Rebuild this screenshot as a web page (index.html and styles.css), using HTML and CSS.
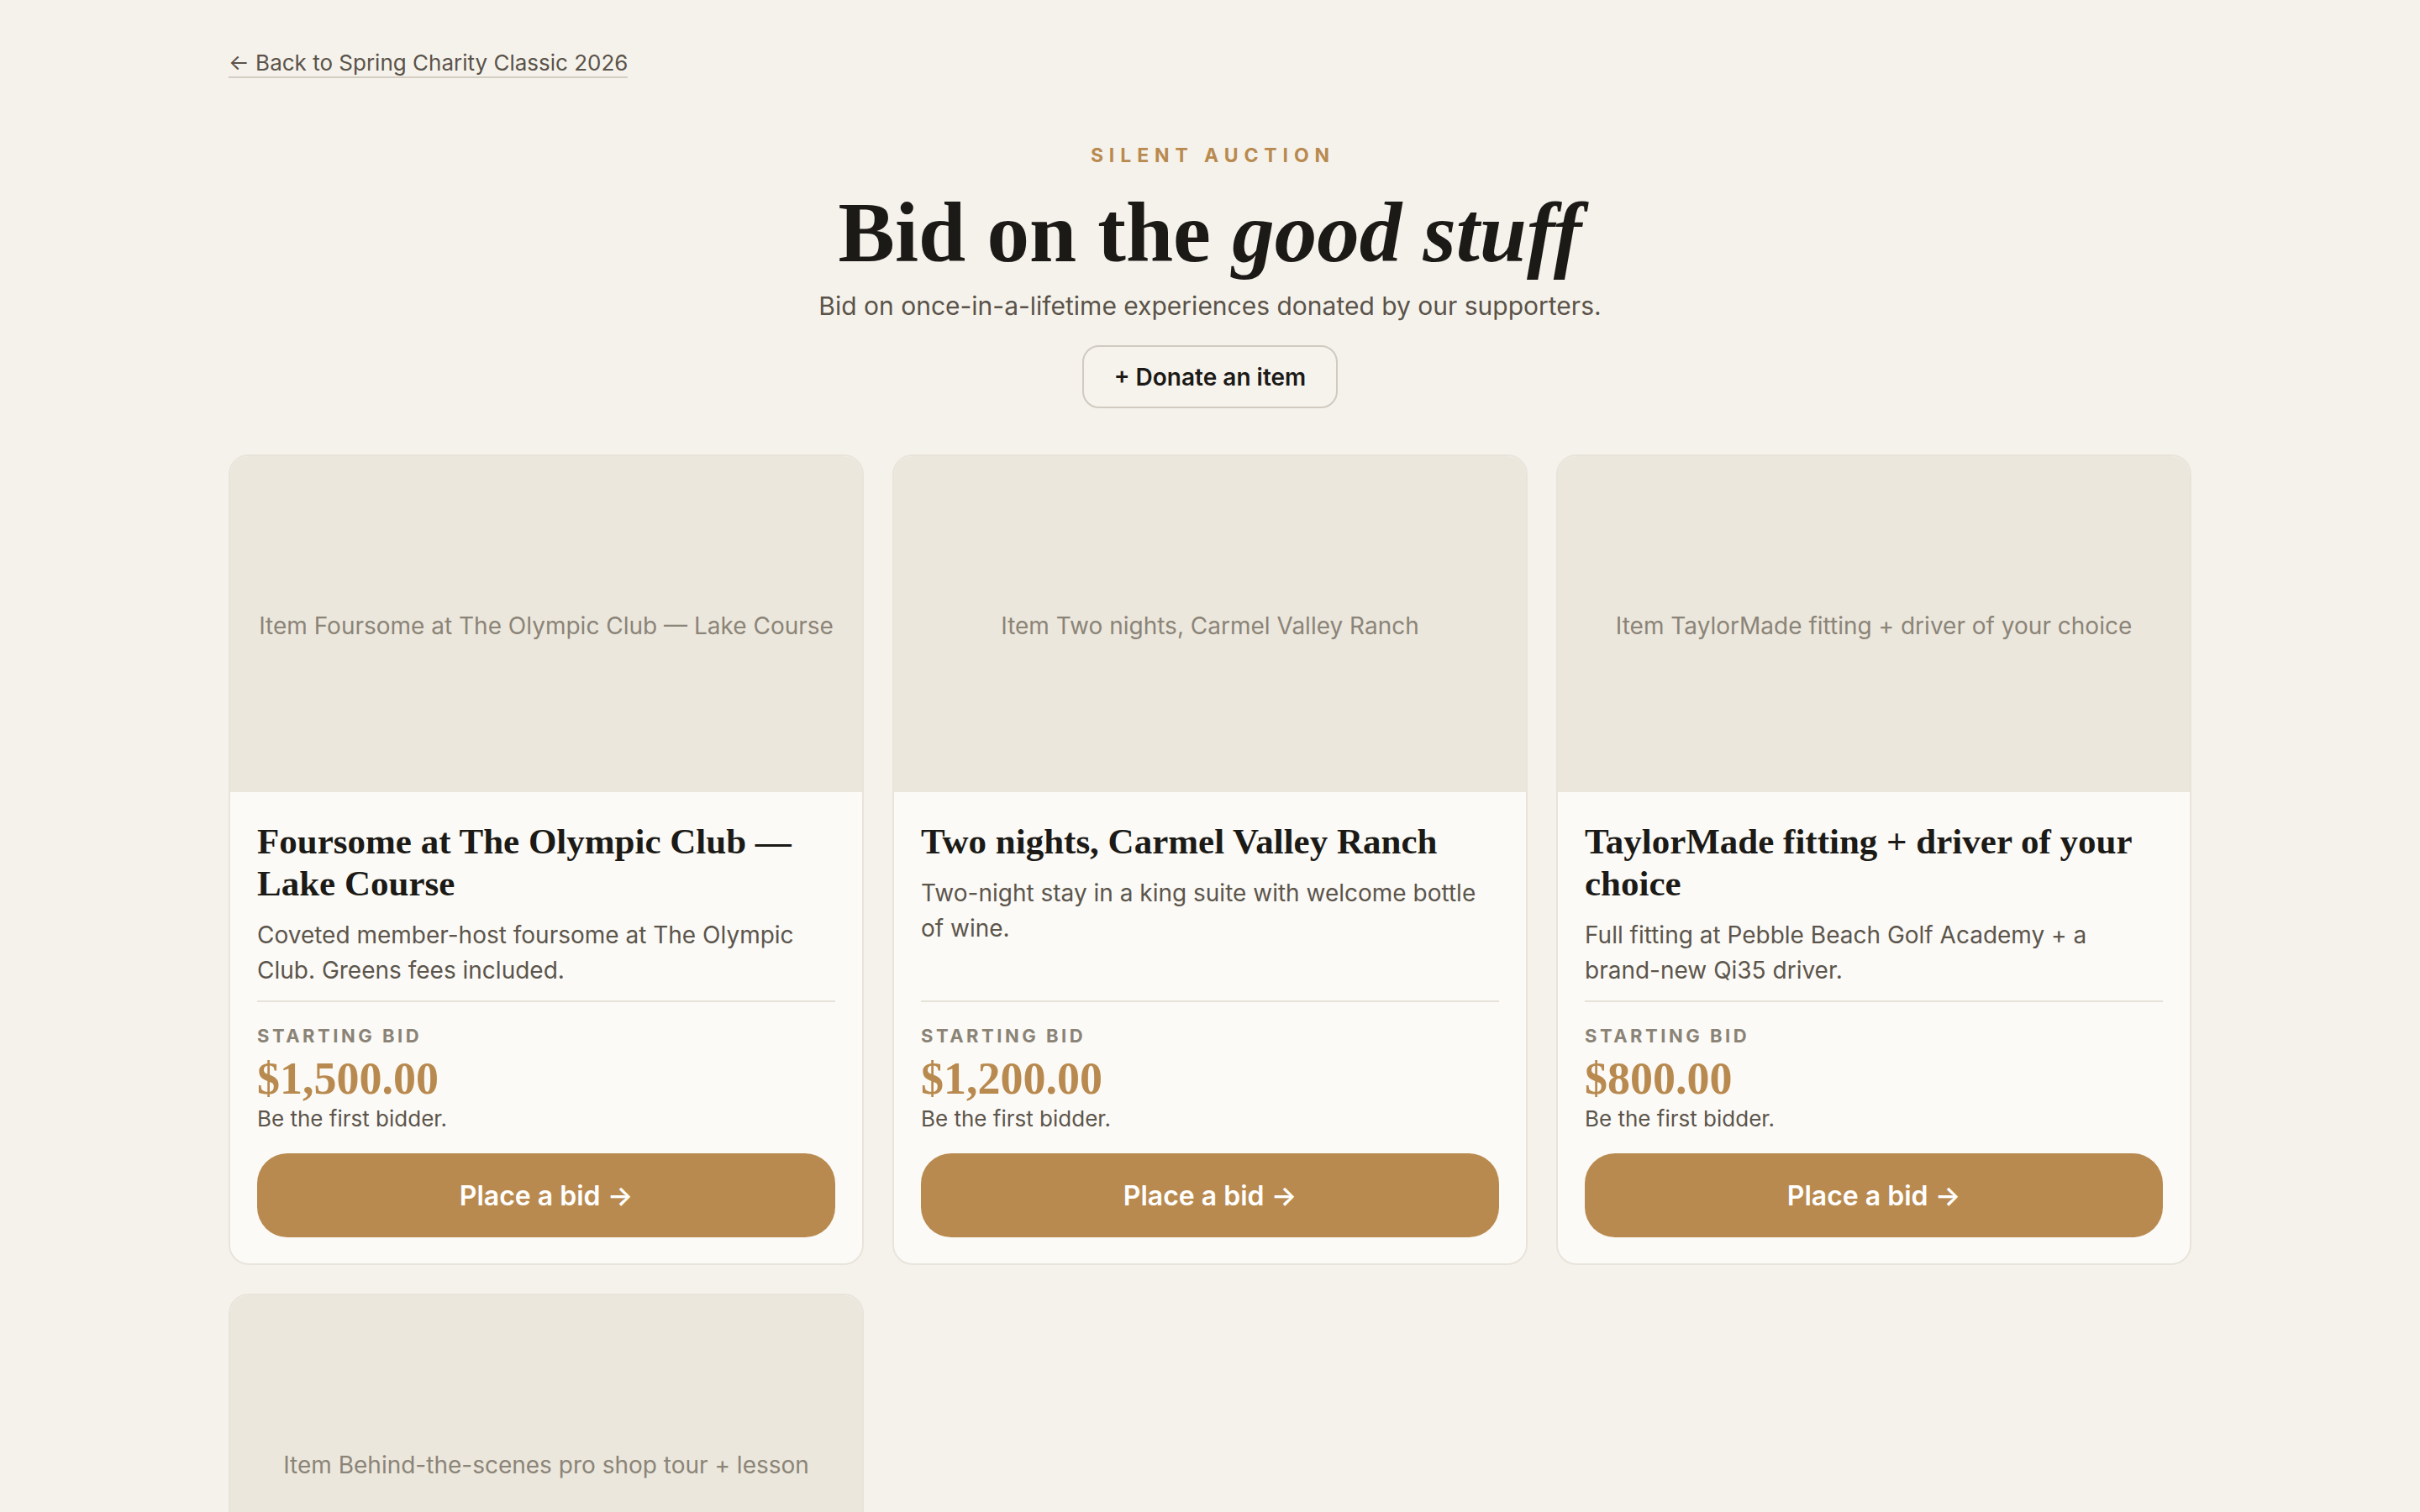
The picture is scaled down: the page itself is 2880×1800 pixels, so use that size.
FILE: index.html
```html
<!DOCTYPE html>
<html lang="en">
<head>
<meta charset="utf-8">
<title>Silent Auction — Spring Charity Classic 2026</title>
<link rel="stylesheet" href="styles.css">
</head>
<body>
<main class="page">
  <nav class="crumbs">
    <a class="back-link" href="#">← Back to Spring Charity Classic 2026</a>
  </nav>

  <header class="hero">
    <p class="eyebrow">SILENT AUCTION</p>
    <h1 class="hero-title">Bid on the <em>good stuff</em></h1>
    <p class="hero-sub">Bid on once-in-a-lifetime experiences donated by our supporters.</p>
    <button class="btn-outline" type="button">+ Donate an item</button>
  </header>

  <section class="grid">
    <article class="card">
      <div class="card-media">Item Foursome at The Olympic Club — Lake Course</div>
      <div class="card-body">
        <h2 class="card-title">Foursome at The Olympic Club — Lake Course</h2>
        <p class="card-desc">Coveted member-host foursome at The Olympic Club. Greens fees included.</p>
        <div class="card-foot">
          <p class="bid-label">STARTING BID</p>
          <p class="bid-price">$1,500.00</p>
          <p class="bid-note">Be the first bidder.</p>
          <button class="btn-bid" type="button">Place a bid →</button>
        </div>
      </div>
    </article>

    <article class="card">
      <div class="card-media">Item Two nights, Carmel Valley Ranch</div>
      <div class="card-body">
        <h2 class="card-title">Two nights, Carmel Valley Ranch</h2>
        <p class="card-desc">Two-night stay in a king suite with welcome bottle of wine.</p>
        <div class="card-foot">
          <p class="bid-label">STARTING BID</p>
          <p class="bid-price">$1,200.00</p>
          <p class="bid-note">Be the first bidder.</p>
          <button class="btn-bid" type="button">Place a bid →</button>
        </div>
      </div>
    </article>

    <article class="card">
      <div class="card-media">Item TaylorMade fitting + driver of your choice</div>
      <div class="card-body">
        <h2 class="card-title">TaylorMade fitting + driver of your choice</h2>
        <p class="card-desc">Full fitting at Pebble Beach Golf Academy + a brand-new Qi35 driver.</p>
        <div class="card-foot">
          <p class="bid-label">STARTING BID</p>
          <p class="bid-price">$800.00</p>
          <p class="bid-note">Be the first bidder.</p>
          <button class="btn-bid" type="button">Place a bid →</button>
        </div>
      </div>
    </article>

    <article class="card">
      <div class="card-media">Item Behind-the-scenes pro shop tour + lesson</div>
      <div class="card-body">
        <h2 class="card-title">Behind-the-scenes pro shop tour + lesson</h2>
        <p class="card-desc">A private tour of the pro shop followed by a one-hour lesson with our head pro.</p>
        <div class="card-foot">
          <p class="bid-label">STARTING BID</p>
          <p class="bid-price">$300.00</p>
          <p class="bid-note">Be the first bidder.</p>
          <button class="btn-bid" type="button">Place a bid →</button>
        </div>
      </div>
    </article>
  </section>
</main>
</body>
</html>
```

FILE: styles.css
```css
* { box-sizing: border-box; }

html, body {
  margin: 0;
  padding: 0;
}

body {
  background: #f5f2eb;
  color: #1c1a17;
  font-family: Inter, "Noto Sans", "Liberation Sans", sans-serif;
}

p, h1, h2 { margin: 0; }

.page {
  max-width: 2336px;
  margin: 0 auto;
  padding: 59px 0 120px;
}

/* back link */
.crumbs {
  display: flex;
}

.back-link {
  display: inline-block;
  font-size: 26px;
  line-height: 32px;
  color: #5a534a;
  text-decoration: none;
  border-bottom: 2px solid #d3cdc2;
}

/* hero */
.hero {
  display: flex;
  flex-direction: column;
  align-items: center;
  text-align: center;
  padding-top: 76px;
}

.eyebrow {
  font-size: 23px;
  line-height: 33px;
  font-weight: 700;
  letter-spacing: 0.3em;
  color: #b98a4f;
  margin-right: -0.3em;
}

.hero-title {
  margin-top: 20px;
  font-family: "Liberation Serif", "Times New Roman", serif;
  font-weight: 700;
  font-size: 101px;
  line-height: 110px;
  color: #1c1a17;
}

.hero-title em {
  font-style: italic;
}

.hero-sub {
  margin-top: 10px;
  font-size: 30px;
  line-height: 45px;
  color: #5a534a;
}

.btn-outline {
  margin-top: 24px;
  height: 75px;
  padding: 0 36px;
  border: 2px solid #d0cac0;
  border-radius: 20px;
  background: #f6f3ed;
  color: #1c1a17;
  font-family: Inter, "Liberation Sans", sans-serif;
  font-size: 28px;
  font-weight: 600;
  cursor: pointer;
}

/* grid of items */
.grid {
  margin-top: 55px;
  display: grid;
  grid-template-columns: repeat(3, 1fr);
  gap: 34px;
}

.card {
  display: flex;
  flex-direction: column;
  background: #fbfaf6;
  border: 2px solid #e8e4db;
  border-radius: 24px;
  overflow: hidden;
}

.card-media {
  height: 400px;
  display: flex;
  align-items: center;
  justify-content: center;
  padding: 4px 32px 0;
  background: #ebe7dc;
  color: #8b8478;
  font-size: 28px;
  text-align: center;
}

.card-body {
  flex: 1;
  display: flex;
  flex-direction: column;
  padding: 34px 32px 31px;
}

.card-title {
  font-family: "Liberation Serif", "Times New Roman", serif;
  font-weight: 700;
  font-size: 43px;
  line-height: 50px;
  color: #1c1a17;
}

.card-desc {
  margin-top: 15px;
  font-size: 28px;
  line-height: 42px;
  color: #5c554c;
}

.card-foot {
  margin-top: auto;
  padding-top: 15px;
}

.bid-label {
  border-top: 2px solid #e6e2da;
  padding-top: 24px;
  font-size: 22px;
  line-height: 33px;
  font-weight: 700;
  letter-spacing: 0.16em;
  color: #8a8376;
}

.bid-price {
  margin-top: 5px;
  font-family: "Liberation Serif", "Times New Roman", serif;
  font-weight: 700;
  font-size: 54px;
  line-height: 58px;
  color: #b98a4f;
}

.bid-note {
  font-size: 26px;
  line-height: 38px;
  color: #5c554c;
}

.bid-note + .btn-bid {
  margin-top: 22px;
}

.btn-bid {
  width: 100%;
  height: 100px;
  border: 0;
  border-radius: 36px;
  background: #b98a4f;
  color: #ffffff;
  font-family: Inter, "Liberation Sans", sans-serif;
  font-size: 32px;
  font-weight: 600;
  cursor: pointer;
}
```
